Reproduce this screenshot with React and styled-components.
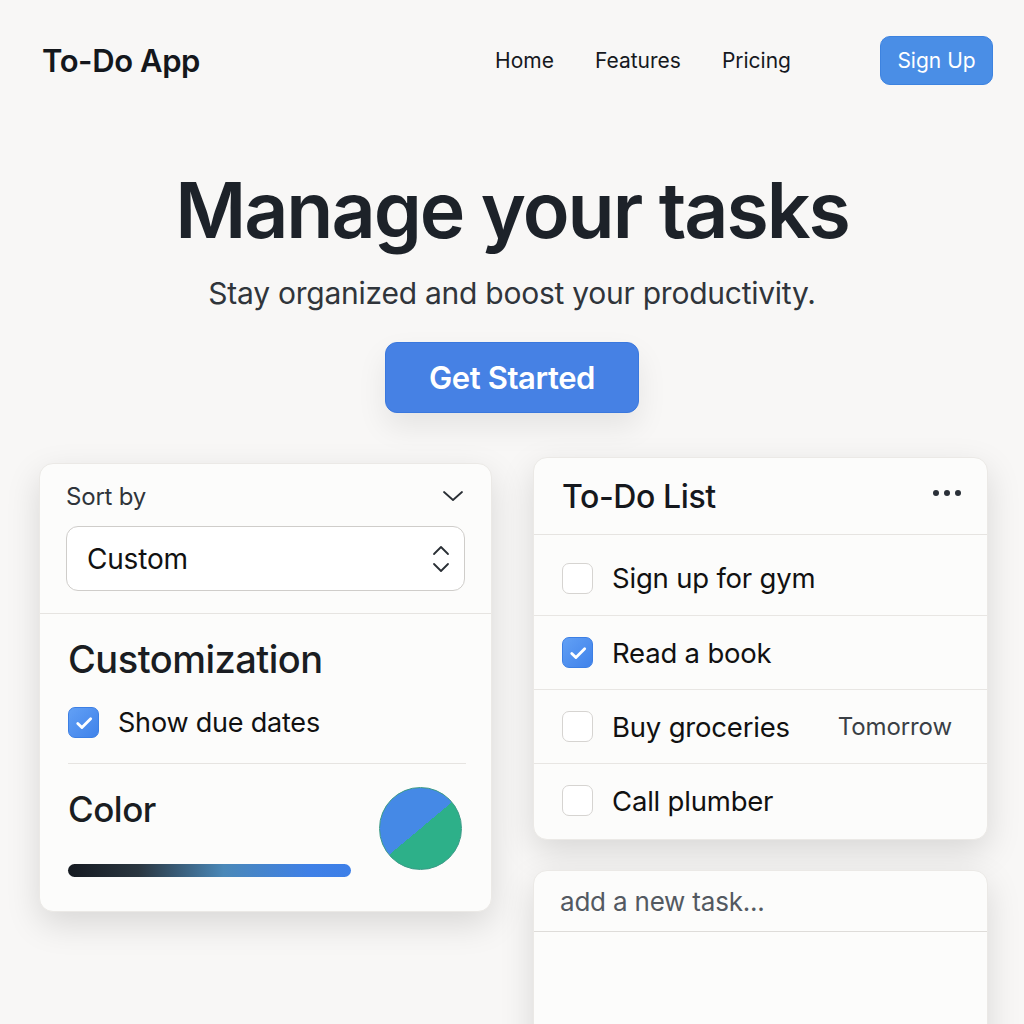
import React from "react";
import styled, { createGlobalStyle } from "styled-components";

const Global = createGlobalStyle`
  html, body { margin: 0; padding: 0; background: #f8f7f6; }
  body { font-family: Inter, "Noto Sans", "Liberation Sans", sans-serif; color: #16191e; }
  * { box-sizing: border-box; }
`;

const Page = styled.div`
  width: 1024px;
  height: 1024px;
  overflow: hidden;
  background: #f8f7f6;
`;

const Header = styled.header`
  height: 120px;
  display: flex;
  align-items: center;
  padding: 0 31px 0 42px;
`;

const Logo = styled.div`
  font-size: 31px;
  font-weight: 600;
  letter-spacing: -0.4px;
  color: #14171c;
  flex: 1;
`;

const Nav = styled.nav`
  display: flex;
  gap: 41px;
  margin-right: 89px;
`;

const NavLink = styled.a`
  font-size: 21px;
  color: #16191e;
  text-decoration: none;
`;

const SmallButton = styled.button`
  width: 113px;
  height: 49px;
  border: 1px solid #3d83e0;
  border-radius: 10px;
  background: #4a8ee6;
  color: #fff;
  font-family: inherit;
  font-size: 21px;
  padding: 0;
`;

const Hero = styled.section`
  display: flex;
  flex-direction: column;
  align-items: center;
  padding-top: 42px;
`;

const Title = styled.h1`
  margin: 0;
  font-size: 77px;
  line-height: 96px;
  font-weight: 600;
  letter-spacing: -2px;
  color: #1d2229;
`;

const Subtitle = styled.p`
  margin: 17px 0 0;
  font-size: 30px;
  line-height: 36px;
  color: #30353b;
  letter-spacing: -0.25px;
`;

const BigButton = styled.button`
  margin-top: 31px;
  width: 254px;
  height: 71px;
  border: 1px solid #3a78de;
  border-radius: 12px;
  background: #4681e4;
  color: #fff;
  font-family: inherit;
  font-size: 31px;
  font-weight: 600;
  letter-spacing: -0.4px;
  box-shadow: 0 14px 30px rgba(0, 0, 0, 0.08);
`;

const Columns = styled.div`
  display: grid;
  grid-template-columns: 453px 455px;
  column-gap: 41px;
  padding: 0 0 0 39px;
  margin-top: 44px;
  align-items: start;
`;

const Col = styled.div`
  display: flex;
  flex-direction: column;
  gap: 30px;
  margin-top: ${(p) => p.$offset || 0}px;
`;

const Card = styled.div`
  background: #fcfcfb;
  border-radius: 14px;
  border: 1px solid #ebe9e6;
  box-shadow: 0 12px 34px rgba(0, 0, 0, 0.13);
  overflow: hidden;
  height: ${(p) => (p.$h ? `${p.$h}px` : "auto")};
`;

const SortSection = styled.div`
  padding: 14px 26px 22px 26px;
  border-bottom: 1px solid #e6e4e1;
`;

const SortHead = styled.div`
  display: flex;
  justify-content: space-between;
  align-items: center;
  height: 36px;
`;

const SortLabel = styled.span`
  font-size: 24px;
  color: #2f343a;
  letter-spacing: -0.2px;
`;

const Select = styled.div`
  margin-top: 12px;
  height: 65px;
  border: 1px solid #cfcdca;
  border-radius: 12px;
  background: #fff;
  display: flex;
  align-items: center;
  justify-content: space-between;
  padding: 0 12px 0 20px;
  font-size: 28px;
  color: #111;
  letter-spacing: -0.2px;
`;

const CustomSection = styled.div`
  padding: 20px 25px 0 28px;
`;

const SectionTitle = styled.h2`
  margin: 0;
  font-size: 38px;
  line-height: 50px;
  font-weight: 500;
  letter-spacing: -0.5px;
  color: #1a1d22;
`;

const CheckRow = styled.label`
  display: flex;
  align-items: center;
  gap: 19px;
  margin-top: 22px;
  padding-bottom: 24px;
  border-bottom: 1px solid #e6e4e1;
  font-size: 27px;
  color: #111;
  letter-spacing: -0.2px;
`;

const Box = styled.span`
  width: 31px;
  height: 31px;
  flex: none;
  border-radius: 7px;
  display: flex;
  align-items: center;
  justify-content: center;
  background: ${(p) => (p.$checked ? "linear-gradient(135deg, #62a0f5, #3f82ea)" : "#fff")};
  border: 1px solid ${(p) => (p.$checked ? "#3c7fe4" : "#d6d4d1")};
`;

const ColorRow = styled.div`
  display: flex;
  justify-content: space-between;
  align-items: flex-start;
  padding: 20px 4px 34px 0;
`;

const ColorLeft = styled.div`
  display: flex;
  flex-direction: column;
`;

const ColorTitle = styled.h2`
  margin: 0;
  font-size: 35px;
  line-height: 50px;
  font-weight: 500;
  letter-spacing: -0.5px;
  color: #1a1d22;
`;

const GradientBar = styled.div`
  margin-top: 30px;
  width: 283px;
  height: 13px;
  border-radius: 7px;
  background: linear-gradient(90deg, #151a21 0%, #2a3640 25%, #4a88b8 55%, #3f80e6 85%, #3d7fe8 100%);
`;

const Swatch = styled.div`
  margin-top: 3px;
  width: 83px;
  height: 83px;
  border-radius: 50%;
  background: linear-gradient(140deg, #4589e6 50%, #2db089 50%);
  border: 1px solid #3a9a86;
`;

const ListHead = styled.div`
  height: 77px;
  display: flex;
  align-items: center;
  justify-content: space-between;
  padding: 0 26px 0 28px;
  border-bottom: 1px solid #e6e4e1;
`;

const ListTitle = styled.h3`
  margin: 0;
  font-size: 32px;
  font-weight: 500;
  letter-spacing: -0.4px;
  color: #15181d;
`;

const Dots = styled.div`
  display: flex;
  gap: 5px;
  margin-top: -6px;
`;

const Dot = styled.span`
  width: 6px;
  height: 6px;
  border-radius: 50%;
  background: #2a3038;
`;

const List = styled.div`
  padding: 6px 0 2px;
`;

const Row = styled.div`
  height: 74px;
  display: flex;
  align-items: center;
  gap: 19px;
  padding: 0 35px 0 28px;
  border-top: ${(p) => (p.$first ? "none" : "1px solid #e8e6e3")};
  font-size: 27.5px;
  color: #111;
  letter-spacing: -0.2px;
`;

const RowText = styled.span`
  flex: 1;
`;

const Due = styled.span`
  font-size: 24px;
  color: #3a3f45;
  letter-spacing: -0.1px;
`;

const InputRow = styled.div`
  height: 61px;
  display: flex;
  align-items: center;
  padding: 0 26px;
  border-bottom: 1px solid #dedcd9;
  font-size: 26px;
  color: #535961;
  letter-spacing: -0.2px;
`;

const Check = () => (
  <svg width="20" height="20" viewBox="0 0 24 24" fill="none" stroke="#fff" strokeWidth="3.4" strokeLinecap="round" strokeLinejoin="round">
    <path d="M4.5 12.5l5 5L20 7" />
  </svg>
);

const ChevronDown = () => (
  <svg width="24" height="24" viewBox="0 0 24 24" fill="none" stroke="#2a2f35" strokeWidth="1.8" strokeLinecap="round" strokeLinejoin="round">
    <path d="M3 8l9 8 9-8" />
  </svg>
);

const UpDown = () => (
  <svg width="22" height="32" viewBox="0 0 22 32" fill="none" stroke="#2a2f35" strokeWidth="1.8" strokeLinecap="round" strokeLinejoin="round">
    <path d="M4 11l7-7 7 7" />
    <path d="M4 21l7 7 7-7" />
  </svg>
);

const tasks = [
  { text: "Sign up for gym", done: false },
  { text: "Read a book", done: true },
  { text: "Buy groceries", done: false, due: "Tomorrow" },
  { text: "Call plumber", done: false },
];

export default function App() {
  return (
    <Page>
      <Global />
      <Header>
        <Logo>To-Do App</Logo>
        <Nav>
          <NavLink>Home</NavLink>
          <NavLink>Features</NavLink>
          <NavLink>Pricing</NavLink>
        </Nav>
        <SmallButton>Sign Up</SmallButton>
      </Header>
      <Hero>
        <Title>Manage your tasks</Title>
        <Subtitle>Stay organized and boost your productivity.</Subtitle>
        <BigButton>Get Started</BigButton>
      </Hero>
      <Columns>
        <Col $offset={6}>
          <Card>
            <SortSection>
              <SortHead>
                <SortLabel>Sort by</SortLabel>
                <ChevronDown />
              </SortHead>
              <Select>
                <span>Custom</span>
                <UpDown />
              </Select>
            </SortSection>
            <CustomSection>
              <SectionTitle>Customization</SectionTitle>
              <CheckRow>
                <Box $checked>
                  <Check />
                </Box>
                Show due dates
              </CheckRow>
              <ColorRow>
                <ColorLeft>
                  <ColorTitle>Color</ColorTitle>
                  <GradientBar />
                </ColorLeft>
                <Swatch />
              </ColorRow>
            </CustomSection>
          </Card>
        </Col>
        <Col>
          <Card>
            <ListHead>
              <ListTitle>To-Do List</ListTitle>
              <Dots>
                <Dot />
                <Dot />
                <Dot />
              </Dots>
            </ListHead>
            <List>
              {tasks.map((t, i) => (
                <Row key={t.text} $first={i === 0}>
                  <Box $checked={t.done}>{t.done && <Check />}</Box>
                  <RowText>{t.text}</RowText>
                  {t.due && <Due>{t.due}</Due>}
                </Row>
              ))}
            </List>
          </Card>
          <Card $h={200}>
            <InputRow>add a new task...</InputRow>
          </Card>
        </Col>
      </Columns>
    </Page>
  );
}
